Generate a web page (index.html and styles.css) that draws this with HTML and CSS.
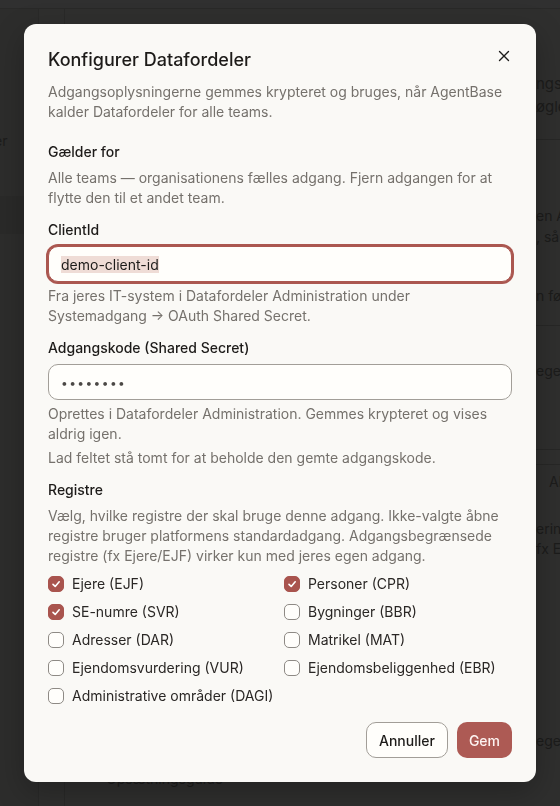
FILE: index.html
```html
<!DOCTYPE html>
<html lang="da">
<head>
<meta charset="utf-8">
<title>Konfigurer Datafordeler</title>
<link rel="stylesheet" href="styles.css">
</head>
<body>
<div class="app" aria-hidden="true">
  <div class="topbar"></div>
  <div class="shell">
    <aside class="rail">
      <div class="rail-label">er</div>
      <div class="rail-item"></div>
    </aside>
    <div class="subrail"></div>
    <main class="bg-main">
      <div class="frag frag-lg">ngsoplysninger</div>
      <div class="frag frag-lg frag-2">øgler</div>
      <div class="bg-rule rule-1"></div>
      <div class="frag frag-3">en AgentBase</div>
      <div class="frag frag-4">, så den</div>
      <div class="frag frag-5">n før</div>
      <div class="bg-rule rule-2"></div>
      <div class="frag frag-6">egen</div>
      <div class="bg-rule rule-3"></div>
      <div class="bg-rule rule-4"></div>
      <div class="frag frag-tab">Alle</div>
      <div class="frag frag-8">ering</div>
      <div class="frag frag-9">fx Ejere</div>
      <div class="frag frag-10">egen</div>
      <div class="frag frag-11"><span class="bullet"></span>Opsætningsguide</div>
    </main>
  </div>
</div>

<div class="dialog" role="dialog" aria-labelledby="dlg-title">
  <button class="close" type="button" aria-label="Luk">
    <svg width="16" height="16" viewBox="0 0 16 16" fill="none" stroke="currentColor" stroke-width="1.4" stroke-linecap="round"><path d="M3.5 3.5 L12.5 12.5 M12.5 3.5 L3.5 12.5"/></svg>
  </button>
  <h2 class="title" id="dlg-title">Konfigurer Datafordeler</h2>
  <p class="desc">Adgangsoplysningerne gemmes krypteret og bruges, når AgentBase kalder Datafordeler for alle teams.</p>

  <form class="form">
    <div class="field">
      <div class="label">Gælder for</div>
      <p class="muted field-text">Alle teams — organisationens fælles adgang. Fjern adgangen for at flytte den til et andet team.</p>
    </div>

    <div class="field">
      <label class="label">ClientId</label>
      <div class="input is-focused"><span class="selected">demo-client-id</span></div>
      <p class="muted hint">Fra jeres IT-system i Datafordeler Administration under Systemadgang → OAuth Shared Secret.</p>
    </div>

    <div class="field">
      <label class="label">Adgangskode (Shared Secret)</label>
      <div class="input"><span class="dots">••••••••</span></div>
      <p class="muted hint">Oprettes i Datafordeler Administration. Gemmes krypteret og vises aldrig igen.</p>
      <p class="muted hint">Lad feltet stå tomt for at beholde den gemte adgangskode.</p>
    </div>

    <div class="field">
      <div class="label">Registre</div>
      <p class="muted field-text">Vælg, hvilke registre der skal bruge denne adgang. Ikke-valgte åbne registre bruger platformens standardadgang. Adgangsbegrænsede registre (fx Ejere/EJF) virker kun med jeres egen adgang.</p>
      <div class="checks">
        <label class="check"><span class="box on"><svg width="10" height="10" viewBox="0 0 10 10" fill="none" stroke="#fff" stroke-width="1.6" stroke-linecap="round" stroke-linejoin="round"><path d="M2 5.3 L4.2 7.4 L8.2 2.8"/></svg></span>Ejere (EJF)</label>
        <label class="check"><span class="box on"><svg width="10" height="10" viewBox="0 0 10 10" fill="none" stroke="#fff" stroke-width="1.6" stroke-linecap="round" stroke-linejoin="round"><path d="M2 5.3 L4.2 7.4 L8.2 2.8"/></svg></span>Personer (CPR)</label>
        <label class="check"><span class="box on"><svg width="10" height="10" viewBox="0 0 10 10" fill="none" stroke="#fff" stroke-width="1.6" stroke-linecap="round" stroke-linejoin="round"><path d="M2 5.3 L4.2 7.4 L8.2 2.8"/></svg></span>SE-numre (SVR)</label>
        <label class="check"><span class="box"></span>Bygninger (BBR)</label>
        <label class="check"><span class="box"></span>Adresser (DAR)</label>
        <label class="check"><span class="box"></span>Matrikel (MAT)</label>
        <label class="check"><span class="box"></span>Ejendomsvurdering (VUR)</label>
        <label class="check"><span class="box"></span>Ejendomsbeliggenhed (EBR)</label>
        <label class="check"><span class="box"></span>Administrative områder (DAGI)</label>
      </div>
    </div>
  </form>

  <div class="actions">
    <button class="btn btn-outline" type="button">Annuller</button>
    <button class="btn btn-primary" type="button">Gem</button>
  </div>
</div>
</body>
</html>
```

FILE: styles.css
```css
* {
  box-sizing: border-box;
  margin: 0;
  padding: 0;
}

html, body {
  height: 100%;
}

body {
  font-family: Inter, "Noto Sans", sans-serif;
  background: #2f2f2e;
  color: #1d1b19;
  overflow: hidden;
}

/* ---------- dimmed page behind the dialog ---------- */
.app {
  height: 806px;
  display: flex;
  flex-direction: column;
}

.topbar {
  height: 9px;
  border-bottom: 1px solid #292928;
  background: #303030;
}

.shell {
  flex: 1;
  display: flex;
}

.rail {
  width: 39px;
  border-right: 1px solid #292928;
  background: #2d2d2c;
  padding-top: 122px;
}

.rail-label {
  width: 12px;
  font-size: 14px;
  line-height: 20px;
  color: #1c1c1b;
  text-indent: -6px;
  white-space: nowrap;
}

.rail-item {
  margin-top: 45px;
  height: 38px;
  background: #2a2a29;
}

.subrail {
  width: 26px;
  border-right: 1px solid #292928;
}

.bg-main {
  flex: 1;
  padding-top: 65px;
  overflow: hidden;
}

.frag {
  padding-left: 471px;
  font-size: 14px;
  line-height: 20px;
  color: #1c1c1b;
  white-space: nowrap;
}

.frag-lg { font-size: 15px; }
.frag-2 { margin-top: 3px; }
.frag-3 { margin-top: 66px; }
.frag-4 { margin-top: 1px; }
.frag-5 { margin-top: 39px; }
.frag-6 { margin-top: 35px; }
.frag-tab { margin-top: 7px; padding-left: 484px; }
.frag-8 { margin-top: 27px; }
.frag-9 { margin-top: 0; }
.frag-10 { margin-top: 172px; }
.frag-11 {
  margin-top: 18px;
  padding-left: 27px;
  display: flex;
  align-items: center;
  gap: 8px;
}

.bullet {
  width: 6px;
  height: 6px;
  border-radius: 50%;
  background: #1c1c1b;
}

.bg-rule {
  height: 1px;
  background: #272726;
}

.rule-1 { margin-top: 22px; }
.rule-2 { margin-top: 19px; }
.rule-3 { margin-top: 68px; }
.rule-4 { margin-top: 14px; }

/* ---------- dialog ---------- */
.dialog {
  position: fixed;
  top: 24px;
  left: 24px;
  width: 512px;
  padding: 24px;
  background: #faf9f6;
  border-radius: 12px;
  box-shadow: 0 10px 30px rgba(0, 0, 0, 0.25);
}

.close {
  position: absolute;
  top: 24px;
  right: 24px;
  width: 16px;
  height: 16px;
  border: 0;
  background: none;
  color: #1c1b1a;
  display: flex;
  cursor: pointer;
}

.title {
  font-size: 18px;
  line-height: 24px;
  font-weight: 500;
  color: #1d1b19;
}

.desc {
  margin-top: 10px;
  font-size: 14px;
  line-height: 20px;
  color: #75716c;
}

.form {
  margin-top: 20px;
  display: flex;
  flex-direction: column;
  gap: 12px;
}

.field {
  display: flex;
  flex-direction: column;
}

.label {
  font-size: 14px;
  line-height: 20px;
  font-weight: 500;
  color: #1d1b19;
}

.muted {
  font-size: 14px;
  line-height: 20px;
  color: #75716c;
}

.field-text {
  margin-top: 6px;
}

.hint {
  margin-top: 4px;
}

.input {
  margin-top: 6px;
  height: 36px;
  border: 1px solid #a29e98;
  border-radius: 10px;
  background: #fffefb;
  padding: 0 12px;
  display: flex;
  align-items: center;
  font-size: 14px;
  color: #1d1b19;
}

.input.is-focused {
  border-color: #ab5750;
  box-shadow: 0 0 0 2px #ab5750;
}

.selected {
  background: #efdcd6;
}

.dots {
  font-size: 12px;
  letter-spacing: 1.4px;
  color: #4b4845;
}

.checks {
  margin-top: 8px;
  display: grid;
  grid-template-columns: 1fr 1fr;
  column-gap: 8px;
  row-gap: 8px;
}

.check {
  display: flex;
  align-items: center;
  gap: 8px;
  font-size: 14px;
  line-height: 20px;
  color: #2a2725;
}

.box {
  flex: none;
  width: 16px;
  height: 16px;
  border-radius: 5px;
  border: 1px solid #8e8a85;
  background: #fffefb;
  display: flex;
  align-items: center;
  justify-content: center;
}

.box.on {
  background: #a9544e;
  border-color: #a9544e;
}

.actions {
  margin-top: 16px;
  display: flex;
  justify-content: flex-end;
  gap: 9px;
}

.btn {
  height: 36px;
  padding: 0 12px;
  border: 1px solid transparent;
  border-radius: 10px;
  font-family: Inter, "Noto Sans", sans-serif;
  font-size: 14px;
  font-weight: 500;
  cursor: pointer;
}

.btn-outline {
  background: #fffefb;
  border-color: #a29e98;
  color: #1d1b19;
}

.btn-primary {
  background: #ad5a54;
  color: #fdf3f1;
  padding: 0 11px;
}
```
